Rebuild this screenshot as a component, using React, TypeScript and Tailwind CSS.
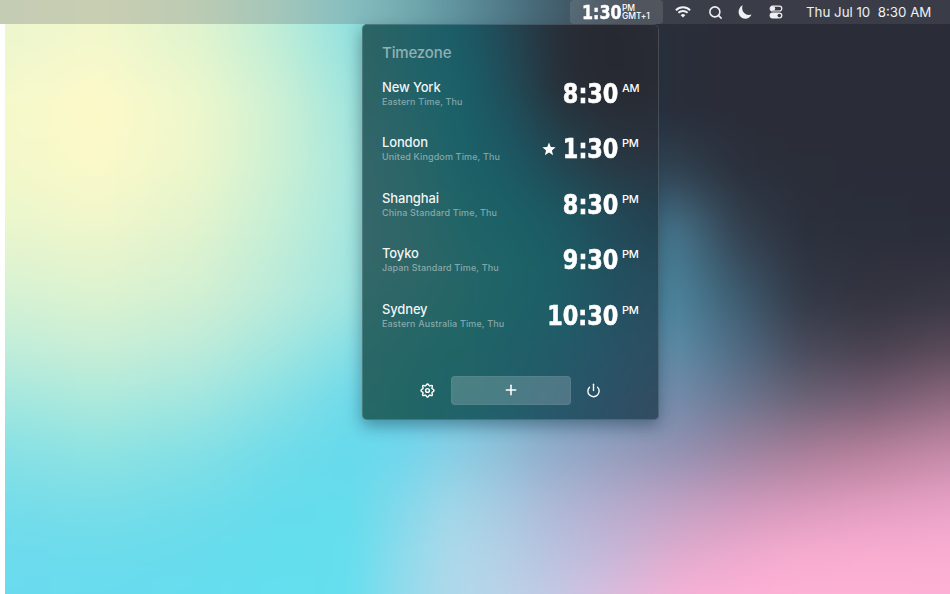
import { Plus, Power, Search } from "lucide-react";

// Colours sit on a grid; every row is a horizontal gradient that
// fades in over the one above it.
type Mesh = {
  xs: number[];
  rows: { y: number; colors: string[] }[];
};

// extra area round a mesh, so that its blur never shows an edge
const BLEED = 40;

const wallpaper: Mesh = {
  xs: [0, 100, 200, 280, 350, 400, 450, 500, 550, 620, 680, 740, 800, 870, 950],
  rows: [
    { y: 24, colors: ["#ecf6d0", "#f2f8cc", "#dff4cf", "#bdedd8", "#93e2e0", "#7cc9cc", "#61a9b4", "#4b8595", "#37606f", "#2c3541", "#2a2e39", "#2a2d38", "#2a2d38", "#2a2d38", "#2a2d38"] },
    { y: 110, colors: ["#f5f9ca", "#fef9c9", "#edf7cc", "#cdf0d4", "#a3e6de", "#85cfd2", "#64aab8", "#4a8596", "#375d6c", "#2c3541", "#292d39", "#2a2d38", "#2a2d38", "#2a2d38", "#2a2d38"] },
    { y: 170, colors: ["#f2f8ca", "#faf9c9", "#ebf6cc", "#cbf0d4", "#a8e7df", "#8bd8de", "#6bbaca", "#5598aa", "#457a8e", "#365366", "#30404f", "#2b303c", "#2a2e39", "#2a2d39", "#2a2d39"] },
    { y: 230, colors: ["#e8f6ce", "#eff6cb", "#e0f3ce", "#c3eed7", "#a6e6df", "#89dae2", "#6bc1d3", "#59a4b8", "#4d8ca2", "#467c94", "#447086", "#33404f", "#2c303d", "#2b2e3b", "#2a2d3a"] },
    { y: 300, colors: ["#d4f1d4", "#dbf2d0", "#d0efd3", "#b8eadb", "#9fe5e1", "#83dbe5", "#6bc8db", "#5fb0c6", "#5698b1", "#508ca4", "#4a829a", "#3e5c70", "#343a48", "#33343f", "#393744"] },
    { y: 350, colors: ["#bfeddb", "#c8eed6", "#bcebda", "#a2e6df", "#86dfe6", "#73d5e8", "#6bc9df", "#6ab8d1", "#69a1bc", "#6592ae", "#5c89a4", "#4f6a82", "#484b5c", "#4a4250", "#5a4a5a"] },
    { y: 400, colors: ["#a3e7df", "#ade9dc", "#a1e6e0", "#87e0e5", "#6edaea", "#6ad3eb", "#74cbe2", "#7abad4", "#7ba6c2", "#7895b3", "#748aa9", "#6d768f", "#6c6478", "#765e73", "#8f6980"] },
    { y: 450, colors: ["#88e1e5", "#90e3e2", "#84e0e5", "#71dce9", "#66daec", "#70d7ec", "#87cfe5", "#8fc0d9", "#91acca", "#939cbc", "#9290b1", "#9a84a1", "#a67d98", "#b47f99", "#c489a7"] },
    { y: 510, colors: ["#74dcea", "#78dde8", "#6fdcea", "#65dcec", "#64ddec", "#82d9eb", "#a2d7e9", "#a8cbe2", "#aebad8", "#b8abcd", "#c4a2c4", "#d19bbe", "#dc9bbe", "#e59fc3", "#eba4c9"] },
    { y: 555, colors: ["#6ddbed", "#6cdcec", "#68dcec", "#63deed", "#65deed", "#8bdbec", "#acd9ea", "#b3d0e6", "#b8c2df", "#c9b5d6", "#e0abcd", "#edaace", "#f6adcf", "#f8add1", "#f9add1"] },
    { y: 594, colors: ["#6adbee", "#68dcee", "#66ddee", "#62dfee", "#66deed", "#90dbec", "#afd8eb", "#b9d3e8", "#c2c9e4", "#ddbadc", "#f5b1d5", "#fcb0d5", "#feb1d5", "#ffb1d5", "#feb0d5"] },
  ],
};

const panelTint: Mesh = {
  xs: [0, 50, 100, 150, 200, 250, 297],
  rows: [
    { y: 0, colors: ["#2d6464", "#226268", "#1b5b68", "#244552", "#282d37", "#272931", "#2b2d36"] },
    { y: 60, colors: ["#306465", "#226369", "#1a6069", "#214b57", "#282e37", "#272931", "#292b35"] },
    { y: 130, colors: ["#34666a", "#296568", "#1b6269", "#1c5763", "#234450", "#293640", "#2a333f"] },
    { y: 190, colors: ["#35676a", "#2e6567", "#206467", "#1b6067", "#1d5761", "#224a58", "#25404f"] },
    { y: 250, colors: ["#346769", "#2e6667", "#256567", "#1d6467", "#1d5d66", "#22505f", "#264c5c"] },
    { y: 320, colors: ["#2c6767", "#256667", "#216566", "#1f6068", "#225b68", "#285366", "#2d4e62"] },
    { y: 395, colors: ["#256966", "#216566", "#21636a", "#235e6b", "#2a566a", "#2e5066", "#344b60"] },
  ],
};

const MeshGradient = ({ mesh }: { mesh: Mesh }) => (
  <div className="absolute -inset-10 blur-[12px]">
    {mesh.rows.map((row, i) => {
      const stops = row.colors.map((c, j) => `${c} ${mesh.xs[j] + BLEED}px`).join(", ");
      const mask =
        i === 0
          ? undefined
          : `linear-gradient(to bottom, transparent ${mesh.rows[i - 1].y + BLEED}px, black ${row.y + BLEED}px)`;
      return (
        <div
          key={row.y}
          className="absolute inset-0"
          style={{ backgroundImage: `linear-gradient(to right, ${stops})`, maskImage: mask }}
        />
      );
    })}
  </div>
);

const zones = [
  { city: "New York", zone: "Eastern Time, Thu", time: "8:30", period: "AM", starred: false },
  { city: "London", zone: "United Kingdom Time, Thu", time: "1:30", period: "PM", starred: true },
  { city: "Shanghai", zone: "China Standard Time, Thu", time: "8:30", period: "PM", starred: false },
  { city: "Toyko", zone: "Japan Standard Time, Thu", time: "9:30", period: "PM", starred: false },
  { city: "Sydney", zone: "Eastern Australia Time, Thu", time: "10:30", period: "PM", starred: false },
];

const WifiIcon = () => (
  <svg viewBox="0 0 16 12" className="h-3 w-4" fill="none" stroke="currentColor" strokeWidth="1.9">
    <path d="M0.9 4.2a10.2 10.2 0 0 1 14.2 0" />
    <path d="M3.4 6.8a6.6 6.6 0 0 1 9.2 0" />
    <path d="M8 11.6L5.7 9.2a3.3 3.3 0 0 1 4.6 0z" fill="currentColor" stroke="none" />
  </svg>
);

const MoonIcon = () => (
  <svg viewBox="0 0 14 14" className="size-3.5" fill="currentColor">
    <path d="M4.6 0.3C3.6 3.2 4.3 6.2 6.2 8.1s4.6 2.5 7.3 1.5c-1 2.5-3.4 4.2-6.2 4.2C3.6 13.8.6 10.8.6 7.1c0-3 1.6-5.7 4-6.8z" />
  </svg>
);

const ControlCenterIcon = () => (
  <svg viewBox="0 0 14 14" className="size-3.5" fill="none" stroke="currentColor">
    <rect x="1.2" y="1.1" width="11.6" height="4.9" rx="2.45" strokeWidth="1.2" />
    <circle cx="3.9" cy="3.55" r="2.3" fill="currentColor" stroke="none" />
    <rect x="0.6" y="7.6" width="12.8" height="6" rx="3" fill="currentColor" stroke="none" />
    <circle cx="10.3" cy="10.6" r="1.8" fill="#3a3f4b" stroke="none" />
  </svg>
);

const StarIcon = () => (
  <svg viewBox="0 0 24 24" className="mt-2 mr-[2px] size-[14px]" fill="currentColor">
    <path d="M12 1l3.1 7.6 8.2.6-6.3 5.3 2 8L12 18.1l-7 4.4 2-8L.7 9.2l8.2-.6z" />
  </svg>
);

const GearIcon = () => (
  <svg viewBox="0 0 24 24" className="size-[15px]" fill="none" stroke="currentColor" strokeWidth="2.3" strokeLinejoin="round">
    <path d="M12 1.5c1.8 0 1.8 2.7 3.2 3.1 1.4.5 3-1.7 4.3-.4s-.9 2.9-.4 4.3c.4 1.4 3.4 1.4 3.4 3.5s-3 2.1-3.4 3.5c-.5 1.4 1.7 3 .4 4.3s-2.9-.9-4.3-.4c-1.4.4-1.4 3.1-3.2 3.1s-1.8-2.7-3.2-3.1c-1.4-.5-3 1.7-4.3.4s.9-2.9.4-4.3c-.4-1.4-3.4-1.4-3.4-3.5s3-2.1 3.4-3.5c.5-1.4-1.7-3-.4-4.3s2.9.9 4.3.4C10.2 4.2 10.2 1.5 12 1.5z" />
    <circle cx="12" cy="12" r="3" />
  </svg>
);

const MenuBar = () => (
  <header className="relative flex h-6 items-center justify-end bg-[#636771]/29 pr-[18px] text-[#eef0f2]">
    <div className="flex h-6 w-[93px] items-center rounded-[4px] bg-white/11 pl-3 text-white">
      <span className="w-[38px] origin-left scale-x-[0.93] font-['DejaVu_Sans_Condensed','DejaVu_Sans',sans-serif] text-[19px] leading-6 font-bold font-stretch-condensed whitespace-nowrap [-webkit-text-stroke:0.4px_white]">
        1:30
      </span>
      <span className="ml-0.5 text-[8.5px] leading-2 font-medium tracking-[-0.1px]">
        <span className="block">PM</span>
        <span className="block">GMT+1</span>
      </span>
    </div>
    <span className="ml-3"><WifiIcon /></span>
    <Search className="ml-[17px] size-[15px]" strokeWidth={2.5} />
    <span className="ml-[15px]"><MoonIcon /></span>
    <span className="ml-[17px]"><ControlCenterIcon /></span>
    <span className="ml-[23px] w-[126px] pt-px text-[13.3px] whitespace-pre">Thu Jul 10  8:30 AM</span>
  </header>
);

const TimezonePanel = () => (
  <section className="absolute top-6 left-[362px] flex h-[396px] w-[297px] flex-col overflow-hidden rounded-[5px] shadow-[0_6px_16px_rgba(20,50,70,0.45)]">
    <MeshGradient mesh={panelTint} />
    <div className="relative flex h-full flex-col rounded-[5px] border border-white/15 px-[19px] pt-[17px]">
      <h1 className="text-[15px] leading-[22px] font-medium tracking-[-0.15px] text-white/50">Timezone</h1>
      <ul className="pt-[15px]">
        {zones.map((item) => (
          <li key={item.city} className="flex h-[55.4px] justify-between">
            <div>
              <p className="text-[13px] leading-[17px] font-medium tracking-[-0.15px] text-white/95">{item.city}</p>
              <p className="text-[9px] leading-[11px] font-medium tracking-[0.14px] text-white/45">{item.zone}</p>
            </div>
            <div className="flex text-white">
              {item.starred && <StarIcon />}
              <span className="origin-right scale-x-[0.92] font-['DejaVu_Sans_Condensed','DejaVu_Sans',sans-serif] text-[27px] leading-[30px] font-bold font-stretch-condensed [-webkit-text-stroke:0.6px_white]">
                {item.time}
              </span>
              <span className="ml-1 w-[17px] pt-px text-[11px] leading-4 font-medium tracking-[-0.3px]">{item.period}</span>
            </div>
          </li>
        ))}
      </ul>
      <div className="mt-[20px] flex items-center justify-center text-white">
        <button className="flex size-[15px]"><GearIcon /></button>
        <button className="mx-4 flex h-[29px] w-[120px] items-center justify-center rounded-[4px] border border-white/5 bg-white/19">
          <Plus className="size-4" strokeWidth={2.3} />
        </button>
        <button className="-ml-px"><Power className="size-[15px]" strokeWidth={2.2} /></button>
      </div>
    </div>
  </section>
);

export default function App() {
  return (
    <main className="relative h-[594px] w-[950px] overflow-hidden font-['Inter',sans-serif]">
      <MeshGradient mesh={wallpaper} />
      <div className="absolute top-6 bottom-0 left-0 w-[5px] bg-white" />
      <TimezonePanel />
      <MenuBar />
    </main>
  );
}
